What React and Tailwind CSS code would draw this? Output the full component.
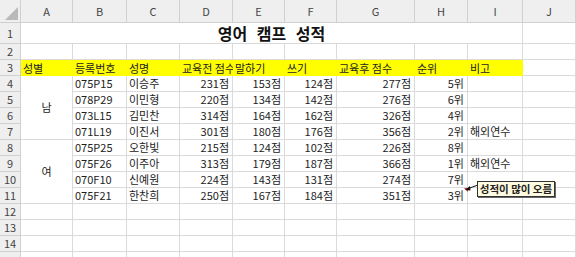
import React from "react";

const cols = ["A", "B", "C", "D", "E", "F", "G", "H", "I", "J"];

const data = [
  ["075P15", "이승주", "231점", "153점", "124점", "277점", "5위", ""],
  ["078P29", "이민형", "220점", "134점", "142점", "276점", "6위", ""],
  ["073L15", "김민찬", "314점", "164점", "162점", "326점", "4위", ""],
  ["071L19", "이진서", "301점", "180점", "176점", "356점", "2위", "해외연수"],
  ["075P25", "오한빛", "215점", "124점", "102점", "226점", "8위", ""],
  ["075F26", "이주아", "313점", "179점", "187점", "366점", "1위", "해외연수"],
  ["070F10", "신예원", "224점", "143점", "131점", "274점", "7위", ""],
  ["075F21", "한찬희", "250점", "167점", "184점", "351점", "3위", ""],
];

const headers = ["성별", "등록번호", "성명", "교육전 점수", "말하기", "쓰기", "교육후 점수", "순위", "비고"];

const font = { fontFamily: '"Noto Sans CJK KR", "Noto Sans", sans-serif' };

function RowHead({ n }) {
  return (
    <div className="flex items-center justify-center bg-[#efefef] border-r border-b border-[#d0d0d0] text-[11px] text-[#444]">
      {n}
    </div>
  );
}

function Cell({ children, right, className = "" }) {
  return (
    <div
      className={`flex items-center overflow-hidden whitespace-nowrap border-r border-b border-[#dadada] text-[11px] text-[#222] ${
        right ? "justify-end pr-[3px]" : "pl-[2px]"
      } ${className}`}
    >
      {children}
    </div>
  );
}

export default function App() {
  return (
    <div className="relative w-[576px] h-[257px] overflow-hidden bg-white" style={font}>
      <div className="grid grid-cols-[21px_52px_54px_53px_53px_52px_52px_78px_53px_55px_53px] grid-rows-[23px_21px_repeat(14,16px)]">
        {/* header row */}
        <div className="relative bg-[#efefef] border-r border-b border-[#d0d0d0]">
          <div className="absolute right-[2px] bottom-[2px] w-0 h-0 border-l-[13px] border-l-transparent border-b-[13px] border-b-[#b9b9b9]" />
        </div>
        {cols.map((c) => (
          <div
            key={c}
            className="flex items-end justify-center pb-[3px] bg-[#efefef] border-r border-b border-[#d0d0d0] text-[11px] text-[#444]"
          >
            {c}
          </div>
        ))}

        {/* row 1 */}
        <RowHead n={1} />
        <div className="col-span-9 flex items-center justify-center border-r border-b border-[#dadada]">
          <span className="text-[16px] font-bold text-[#111]" style={{ wordSpacing: "6px" }}>
            영어 캠프 성적
          </span>
        </div>
        <Cell />

        {/* row 2 */}
        <RowHead n={2} />
        {cols.map((c) => (
          <Cell key={c} />
        ))}

        {/* row 3 */}
        <RowHead n={3} />
        {headers.map((h) => (
          <div
            key={h}
            className="flex items-center overflow-hidden whitespace-nowrap bg-[#ffff00] pl-[2px] text-[11px] text-[#222]"
          >
            {h}
          </div>
        ))}
        <Cell />

        {/* rows 4-11 */}
        {data.map((r, i) => (
          <React.Fragment key={i}>
            <RowHead n={i + 4} />
            {i === 0 && (
              <div className="row-span-4 flex items-center justify-center border-r border-b border-[#dadada] text-[11px] text-[#222]">
                남
              </div>
            )}
            {i === 4 && (
              <div className="row-span-4 flex items-center justify-center border-r border-b border-[#dadada] text-[11px] text-[#222]">
                여
              </div>
            )}
            <Cell>{r[0]}</Cell>
            <Cell>{r[1]}</Cell>
            <Cell right>{r[2]}</Cell>
            <Cell right>{r[3]}</Cell>
            <Cell right>{r[4]}</Cell>
            <Cell right>{r[5]}</Cell>
            <Cell right>{r[6]}</Cell>
            <Cell>{r[7]}</Cell>
            <Cell />
          </React.Fragment>
        ))}

        {/* rows 12-15 */}
        {[12, 13, 14].map((n) => (
          <React.Fragment key={n}>
            <RowHead n={n} />
            {cols.map((c) => (
              <Cell key={c} />
            ))}
          </React.Fragment>
        ))}
        <div className="bg-[#efefef] border-r border-[#d0d0d0]" />
        {cols.map((c) => (
          <div key={c} className="border-r border-[#dadada]" />
        ))}
      </div>

      {/* comment indicator and note */}
      <div className="absolute left-[464px] top-[188px] w-0 h-0 border-l-[4px] border-l-transparent border-t-[4px] border-t-[#d22]" />
      <svg className="absolute left-[464px] top-[183px]" width="16" height="10" viewBox="0 0 16 10">
        <line x1="3" y1="6" x2="14" y2="2" stroke="#111" strokeWidth="1" />
        <polygon points="1,7 6,3 6.5,7.5" fill="#111" />
      </svg>
      <div className="absolute left-[477px] top-[181px] w-[78px] h-[16px] flex items-center justify-center bg-[#fffbe0] border border-[#333] shadow-[1px_1px_0_#666] text-[10.5px] font-bold text-[#222] whitespace-nowrap">
        성적이 많이 오름
      </div>
    </div>
  );
}
